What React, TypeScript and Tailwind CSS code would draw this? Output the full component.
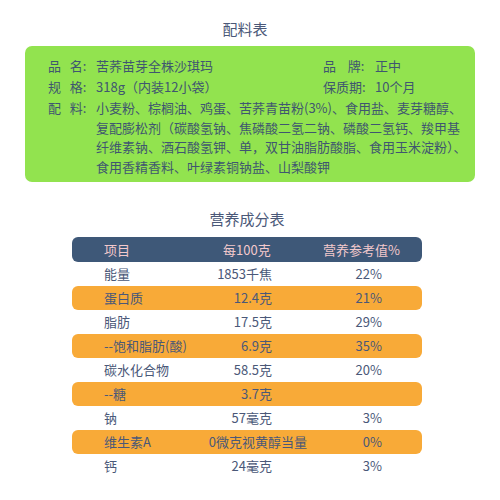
import React, { FC } from "react";

const rows = [
  { name: "能量", value: "1853千焦", nrv: "22%", hl: false },
  { name: "蛋白质", value: "12.4克", nrv: "21%", hl: true },
  { name: "脂肪", value: "17.5克", nrv: "29%", hl: false },
  { name: "--饱和脂肪(酸)", value: "6.9克", nrv: "35%", hl: true },
  { name: "碳水化合物", value: "58.5克", nrv: "20%", hl: false },
  { name: "--糖", value: "3.7克", nrv: "", hl: true },
  { name: "钠", value: "57毫克", nrv: "3%", hl: false },
  { name: "维生素A", value: "0微克视黄醇当量", nrv: "0%", hl: true },
  { name: "钙", value: "24毫克", nrv: "3%", hl: false },
];

const App: FC = () => {
  return (
    <div
      className="w-[500px] h-[500px] bg-white text-[#4a5878] overflow-hidden"
      style={{ fontFamily: '"Noto Sans CJK SC", "Noto Sans", sans-serif' }}
    >
      <h2 className="pt-[19px] text-center text-[15px] leading-5 pl-[-10px]">
        <span className="relative -left-[5px]">配料表</span>
      </h2>
      {/* ingredients */}
      <div className="mx-[25px] mt-[7px] h-[136px] rounded-[7px] bg-[#92e34f] pl-[23px] pt-[10px] text-[13px] leading-5 text-[#3f5670]">
        <div className="flex">
          <span className="w-[48px] whitespace-pre">品   名:</span>
          <span className="w-[227px]">苦荞苗芽全株沙琪玛</span>
          <span className="w-[52px] whitespace-pre">品    牌:</span>
          <span>正中</span>
        </div>
        <div className="flex mt-[1px]">
          <span className="w-[48px] whitespace-pre">规   格:</span>
          <span className="w-[227px]">318g（内装12小袋）</span>
          <span className="w-[52px]">保质期:</span>
          <span>10个月</span>
        </div>
        <div className="flex mt-[1px] whitespace-nowrap">
          <span className="w-[48px] whitespace-pre">配   料:</span>
          <div className="flex flex-col leading-[19.5px]">
            <span>小麦粉、棕榈油、鸡蛋、苦荞青苗粉(3%)、食用盐、麦芽糖醇、</span>
            <span>复配膨松剂（碳酸氢钠、焦磷酸二氢二钠、磷酸二氢钙、羧甲基</span>
            <span>纤维素钠、酒石酸氢钾、单，双甘油脂肪酸脂、食用玉米淀粉）、</span>
            <span>食用香精香料、叶绿素铜钠盐、山梨酸钾</span>
          </div>
        </div>
      </div>

      <h2 className="mt-[27px] text-center text-[15px] leading-5">
        <span className="relative -left-[3px]">营养成分表</span>
      </h2>
      {/* nutrition table */}
      <div className="ml-[72px] mt-[8px] w-[350px] text-[13px]">
        <div className="flex h-[25px] items-center rounded-[6px] bg-[#3e5878] text-[#f3c9cc]">
          <span className="w-[151px] pl-[32px]">项目</span>
          <span className="w-[100px]">每100克</span>
          <span>营养参考值%</span>
        </div>
        {rows.map((r) => (
          <div
            key={r.name}
            className={
              "flex h-[24px] items-center whitespace-nowrap " +
              (r.hl ? "rounded-[6px] bg-[#f8aa38]" : "")
            }
          >
            <span className="w-[138px] pl-[32px]">{r.name}</span>
            <span className="w-[62px] flex justify-end overflow-visible">
              <span className={r.value.length > 7 ? "relative left-[35px]" : ""}>{r.value}</span>
            </span>
            <span className="w-[110px] text-right">{r.nrv}</span>
          </div>
        ))}
      </div>
    </div>
  );
};

export default App;
